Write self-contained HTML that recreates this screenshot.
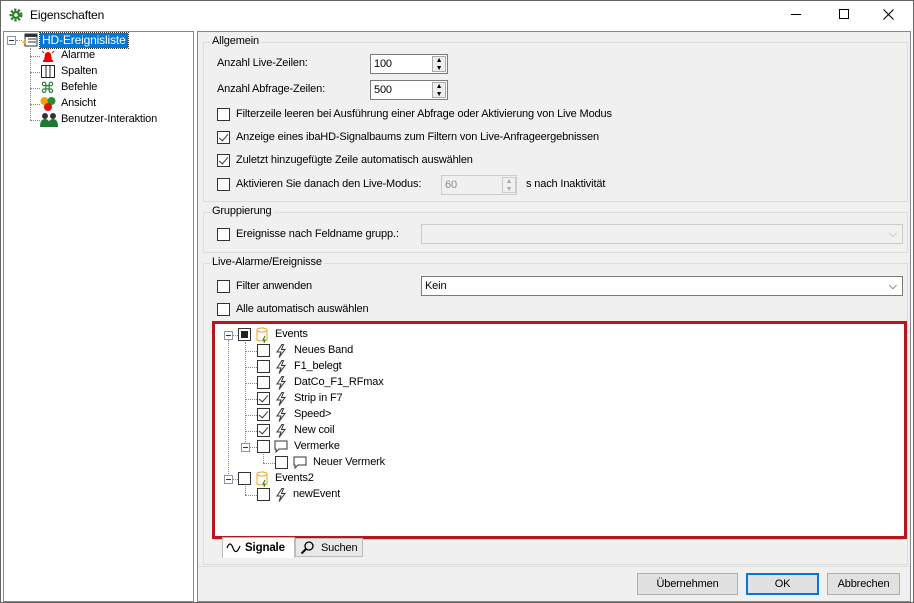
<!DOCTYPE html>
<html><head><meta charset="utf-8"><style>
*{box-sizing:border-box;margin:0;padding:0}
body{width:914px;height:603px;position:relative;background:#fff;font-family:"Liberation Sans",sans-serif;font-size:11px;letter-spacing:-0.15px;color:#000;overflow:hidden}
.a{position:absolute;white-space:nowrap}
.cb{position:absolute;width:13px;height:13px;border:1px solid #333;background:#fff}
.cb.c::after{content:"";position:absolute;left:3px;top:0px;width:4px;height:8px;border:solid #333;border-width:0 1.3px 1.3px 0;transform:rotate(40deg)}
.grp{position:absolute;border:1px solid #dcdcdc}
.gl{position:absolute;top:-8px;left:6px;background:#f0f0f0;padding:0 2px}
.btn{position:absolute;height:22px;border:1px solid #adadad;background:#e1e1e1;text-align:center;line-height:20px}
.inp{position:absolute;height:20px;border:1px solid #7a7a7a;background:#fff;padding-left:3px;line-height:18px}
.dl{position:absolute;border-top:1px dotted #888}
.dv{position:absolute;border-left:1px dotted #888}
.pm{position:absolute;width:9px;height:9px;border:1px solid #8a96a8;background:#fff}
.pm::after{content:"";position:absolute;left:1px;top:3px;width:5px;height:1px;background:#333}
.lt{position:absolute;width:12px;height:14px}
</style></head><body>
<svg width="0" height="0" style="position:absolute"><defs><symbol id="bolt" viewBox="0 0 12 14"><path d="M7 0.5 L2 8 L6 8 L4 13.5 L10 5.5 L6.5 5.5 L8.5 0.5 Z" fill="none" stroke="#333" stroke-width="1"/></symbol></defs></svg>
<div class="a" style="left:0;top:0;width:914px;height:603px;border:1px solid #666"></div>
<svg class="a" style="left:9px;top:8px" width="14" height="14" viewBox="0 0 14 14"><circle cx="7" cy="7" r="5" fill="none" stroke="#2e7d32" stroke-width="3" stroke-dasharray="2.2 1.4"/><circle cx="7" cy="7" r="4" fill="#2e7d32"/><circle cx="7" cy="7" r="1.8" fill="#fff"/></svg>
<div class="a" style="left:30px;top:8px;font-size:12px">Eigenschaften</div>
<div class="a" style="left:791px;top:14px;width:10px;height:1px;background:#000"></div>
<div class="a" style="left:839px;top:9px;width:10px;height:10px;border:1px solid #000"></div>
<svg class="a" style="left:883px;top:9px" width="11" height="11"><path d="M0.5 0.5 L10.5 10.5 M10.5 0.5 L0.5 10.5" stroke="#000" stroke-width="1.1"/></svg>
<!-- left tree -->
<div class="a" style="left:3px;top:31px;width:191px;height:571px;border:1px solid #828790;background:#fff"></div>
<div class="pm" style="left:7px;top:36px"></div>
<div class="dl" style="left:16px;top:40px;width:6px"></div>
<svg class="a" style="left:22px;top:33px" width="16" height="14"><rect x="3" y="1" width="12" height="12" fill="#fff" stroke="#333"/><rect x="3" y="1" width="12" height="3" fill="#333"/><line x1="6" y1="6" x2="14" y2="6" stroke="#333"/><line x1="6" y1="9" x2="14" y2="9" stroke="#333"/><path d="M3 6 L0 10 L2 10 L1 13 L5 8 L3 8 Z" fill="#f5a623"/></svg>
<div class="a" style="left:40px;top:33px;background:#0078d7;color:#fff;padding:0 2px;height:15px;line-height:14px;outline:1px dotted #333;font-size:12px">HD-Ereignisliste</div>
<div class="dv" style="left:30px;top:48px;height:72px"></div>
<div class="dl" style="left:30px;top:56px;width:10px"></div><div class="dl" style="left:30px;top:72px;width:10px"></div><div class="dl" style="left:30px;top:88px;width:10px"></div><div class="dl" style="left:30px;top:104px;width:10px"></div><div class="dl" style="left:30px;top:120px;width:10px"></div>
<svg class="a" style="left:40px;top:48px" width="16" height="15"><path d="M4 13 L5 6 Q8 2 11 6 L12 13 Z" fill="#e00"/><rect x="3" y="12" width="10" height="2" fill="#e00"/><path d="M2 3 L4 5 M14 3 L12 5 M8 0 L8 2" stroke="#e00"/></svg>
<div class="a" style="left:61px;top:49px">Alarme</div>
<svg class="a" style="left:40px;top:64px" width="16" height="15"><rect x="1.5" y="1.5" width="13" height="12" fill="#fff" stroke="#222"/><line x1="6" y1="1" x2="6" y2="14" stroke="#222"/><line x1="10" y1="1" x2="10" y2="14" stroke="#222"/></svg>
<div class="a" style="left:61px;top:65px">Spalten</div>
<div class="a" style="left:40px;top:79px;color:#1b7a2e;font-size:15px">⌘</div>
<div class="a" style="left:61px;top:81px">Befehle</div>
<svg class="a" style="left:40px;top:96px" width="16" height="15"><circle cx="4.5" cy="5" r="4" fill="#f5a000"/><circle cx="11.5" cy="5" r="4" fill="#2e8b2e"/><circle cx="8" cy="11" r="4" fill="#e01010"/></svg>
<div class="a" style="left:61px;top:97px">Ansicht</div>
<svg class="a" style="left:40px;top:112px" width="18" height="15"><circle cx="5" cy="4" r="3" fill="#333"/><circle cx="13" cy="4" r="3" fill="#333"/><path d="M0 15 Q0 7 5 7 Q10 7 10 15Z" fill="#1b7a2e"/><path d="M8 15 Q8 7 13 7 Q18 7 18 15Z" fill="#1b7a2e"/></svg>
<div class="a" style="left:61px;top:113px">Benutzer-Interaktion</div>
<!-- right panel -->
<div class="a" style="left:197px;top:31px;width:714px;height:571px;border:1px solid #828790;background:#f0f0f0"></div>
<div class="grp" style="left:203px;top:42px;width:705px;height:160px"><span class="gl">Allgemein</span></div>
<div class="a" style="left:217px;top:57px">Anzahl Live-Zeilen:</div>
<div class="inp" style="left:370px;top:54px;width:78px">100</div>
<div class="a" style="left:217px;top:83px">Anzahl Abfrage-Zeilen:</div>
<div class="inp" style="left:370px;top:80px;width:78px">500</div>
<div class="a" style="left:432px;top:56px;width:14px;height:16px;border:1px solid #aaa;background:#eee;font-size:7px;line-height:8px;text-align:center">▲<br>▼</div>
<div class="a" style="left:432px;top:82px;width:14px;height:16px;border:1px solid #aaa;background:#eee;font-size:7px;line-height:8px;text-align:center">▲<br>▼</div>
<div class="cb" style="left:217px;top:108px"></div><div class="a" style="left:236px;top:108px">Filterzeile leeren bei Ausführung einer Abfrage oder Aktivierung von Live Modus</div>
<div class="cb c" style="left:217px;top:131px"></div><div class="a" style="left:236px;top:131px">Anzeige eines ibaHD-Signalbaums zum Filtern von Live-Anfrageergebnissen</div>
<div class="cb c" style="left:217px;top:154px"></div><div class="a" style="left:236px;top:154px">Zuletzt hinzugefügte Zeile automatisch auswählen</div>
<div class="cb" style="left:217px;top:178px"></div><div class="a" style="left:236px;top:178px">Aktivieren Sie danach den Live-Modus:</div>
<div class="inp" style="left:441px;top:175px;width:76px;border-color:#ccc;color:#888;background:#f0f0f0">60</div>
<div class="a" style="left:502px;top:177px;width:14px;height:16px;border:1px solid #ccc;font-size:7px;line-height:8px;text-align:center;color:#aaa">▲<br>▼</div>
<div class="a" style="left:526px;top:178px">s nach Inaktivität</div>
<div class="grp" style="left:203px;top:212px;width:705px;height:41px"><span class="gl">Gruppierung</span></div>
<div class="cb" style="left:217px;top:228px"></div><div class="a" style="left:236px;top:228px">Ereignisse nach Feldname grupp.:</div>
<div class="inp" style="left:421px;top:224px;width:482px;border-color:#ccc;background:#f0f0f0"><span style="position:absolute;right:5px;color:#aaa">⌵</span></div>
<div class="grp" style="left:203px;top:263px;width:705px;height:302px"><span class="gl">Live-Alarme/Ereignisse</span></div>
<div class="cb" style="left:217px;top:280px"></div><div class="a" style="left:236px;top:280px">Filter anwenden</div>
<div class="inp" style="left:421px;top:276px;width:482px">Kein<span style="position:absolute;right:5px">⌵</span></div>
<div class="cb" style="left:217px;top:303px"></div><div class="a" style="left:236px;top:303px">Alle automatisch auswählen</div>
<div class="a" style="left:212px;top:321px;width:695px;height:218px;border:3px solid #b5171c;background:#fff"></div>
<!-- event tree -->
<div class="pm" style="left:224px;top:331px"></div>
<div class="dl" style="left:233px;top:335px;width:5px"></div>
<div class="cb" style="left:238px;top:328px"><div style="position:absolute;left:2px;top:2px;width:7px;height:7px;background:#222"></div></div>
<svg class="a" style="left:256px;top:327px" width="14" height="16"><ellipse cx="6" cy="3" rx="5" ry="2" fill="#fff" stroke="#f0a020"/><path d="M1 3 L1 13 Q6 15 11 13 L11 3" fill="none" stroke="#f0a020"/><path d="M9 9 L7 13 L9 13 L8 16" stroke="#1b7a2e" fill="none"/></svg>
<div class="a" style="left:275px;top:328px">Events</div>
<div class="dv" style="left:228px;top:340px;height:140px"></div>
<div class="dv" style="left:245px;top:342px;height:106px"></div>
<div class="dl" style="left:245px;top:351px;width:12px"></div><div class="dl" style="left:245px;top:367px;width:12px"></div><div class="dl" style="left:245px;top:383px;width:12px"></div><div class="dl" style="left:245px;top:399px;width:12px"></div><div class="dl" style="left:245px;top:415px;width:12px"></div><div class="dl" style="left:245px;top:431px;width:12px"></div>
<div class="cb" style="left:257px;top:344px"></div><svg class="lt" style="left:275px;top:344px"><use href="#bolt"/></svg><div class="a" style="left:294px;top:344px">Neues Band</div>
<div class="cb" style="left:257px;top:360px"></div><svg class="lt" style="left:275px;top:360px"><use href="#bolt"/></svg><div class="a" style="left:294px;top:360px">F1_belegt</div>
<div class="cb" style="left:257px;top:376px"></div><svg class="lt" style="left:275px;top:376px"><use href="#bolt"/></svg><div class="a" style="left:294px;top:376px">DatCo_F1_RFmax</div>
<div class="cb c" style="left:257px;top:392px"></div><svg class="lt" style="left:275px;top:392px"><use href="#bolt"/></svg><div class="a" style="left:294px;top:392px">Strip in F7</div>
<div class="cb c" style="left:257px;top:408px"></div><svg class="lt" style="left:275px;top:408px"><use href="#bolt"/></svg><div class="a" style="left:294px;top:408px">Speed&gt;</div>
<div class="cb c" style="left:257px;top:424px"></div><svg class="lt" style="left:275px;top:424px"><use href="#bolt"/></svg><div class="a" style="left:294px;top:424px">New coil</div>
<div class="pm" style="left:241px;top:443px"></div><div class="dl" style="left:250px;top:447px;width:7px"></div>
<div class="cb" style="left:257px;top:440px"></div>
<svg class="a" style="left:273px;top:439px" width="16" height="16"><path d="M2 2 H14 V10 H6 L3 13 V10 H2 Z" fill="#fff" stroke="#333"/></svg>
<div class="a" style="left:294px;top:440px">Vermerke</div>
<div class="dv" style="left:263px;top:454px;height:9px"></div><div class="dl" style="left:263px;top:463px;width:12px"></div>
<div class="cb" style="left:275px;top:456px"></div>
<svg class="a" style="left:292px;top:455px" width="16" height="16"><path d="M2 2 H14 V10 H6 L3 13 V10 H2 Z" fill="#fff" stroke="#333"/></svg>
<div class="a" style="left:313px;top:456px">Neuer Vermerk</div>
<div class="pm" style="left:224px;top:475px"></div><div class="dl" style="left:233px;top:479px;width:5px"></div>
<div class="cb" style="left:238px;top:472px"></div>
<svg class="a" style="left:256px;top:471px" width="14" height="16"><ellipse cx="6" cy="3" rx="5" ry="2" fill="#fff" stroke="#f0a020"/><path d="M1 3 L1 13 Q6 15 11 13 L11 3" fill="none" stroke="#f0a020"/><path d="M9 9 L7 13 L9 13 L8 16" stroke="#1b7a2e" fill="none"/></svg>
<div class="a" style="left:275px;top:472px">Events2</div>
<div class="dv" style="left:245px;top:486px;height:9px"></div><div class="dl" style="left:245px;top:495px;width:12px"></div>
<div class="cb" style="left:257px;top:488px"></div><svg class="lt" style="left:275px;top:488px"><use href="#bolt"/></svg><div class="a" style="left:293px;top:488px">newEvent</div>
<!-- tabs -->
<div class="a" style="left:214px;top:539px;width:689px;height:20px;border-top:1px solid #ccc"></div>
<div class="a" style="left:222px;top:537px;width:73px;height:21px;background:#fff;border:1px solid #bbb;border-bottom:none;font-weight:bold;line-height:20px;padding-left:22px;font-size:11.5px">Signale</div>
<svg class="a" style="left:226px;top:542px" width="16" height="11"><path d="M1 6 Q4 -2 7 6 Q10 14 14 4" fill="none" stroke="#000" stroke-width="1.2"/></svg>
<div class="a" style="left:295px;top:538px;width:68px;height:19px;background:#e8e8e8;border:1px solid #bbb;line-height:18px;padding-left:25px">Suchen</div>
<svg class="a" style="left:300px;top:540px" width="15" height="15"><circle cx="9" cy="6" r="4" fill="none" stroke="#000" stroke-width="1.3"/><path d="M6 9 L1.5 13.5" stroke="#000" stroke-width="2"/></svg>
<!-- bottom -->
<div class="a" style="left:198px;top:566px;width:712px;height:1px;background:#ddd"></div>
<div class="btn" style="left:637px;top:573px;width:101px">Übernehmen</div>
<div class="btn" style="left:746px;top:573px;width:73px;border:2px solid #0078d7;line-height:18px">OK</div>
<div class="btn" style="left:827px;top:573px;width:73px">Abbrechen</div>
</body></html>
